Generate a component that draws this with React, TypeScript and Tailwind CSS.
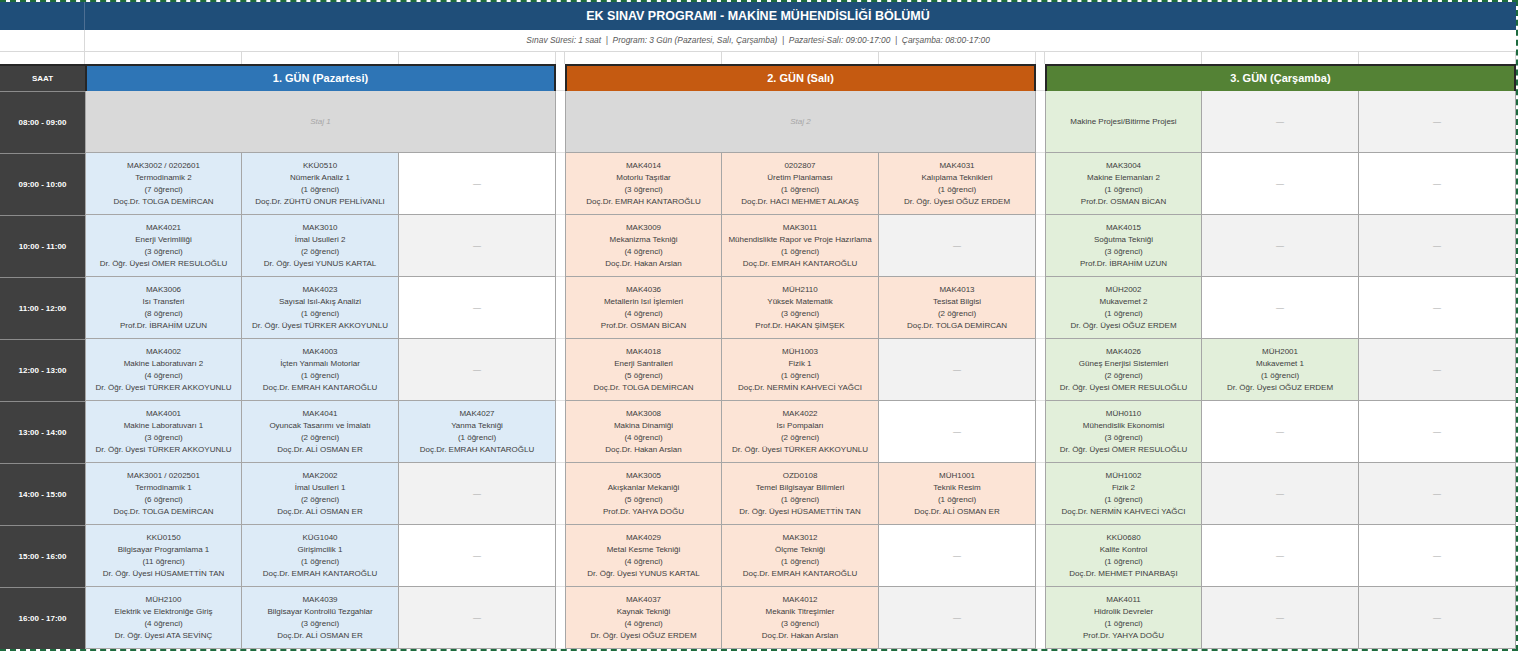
import React from 'react'

type Exam = { code: string; name: string; count: number; teacher: string }
type Cell = Exam | null | { single: string } | { staj: string }

const times = [
  '08:00 - 09:00',
  '09:00 - 10:00',
  '10:00 - 11:00',
  '11:00 - 12:00',
  '12:00 - 13:00',
  '13:00 - 14:00',
  '14:00 - 15:00',
  '15:00 - 16:00',
  '16:00 - 17:00',
]

const e = (code: string, name: string, count: number, teacher: string): Exam => ({ code, name, count, teacher })

const days: { title: string; head: string; fill: string; rows: Cell[][] }[] = [
  {
    title: '1. GÜN (Pazartesi)',
    head: 'bg-[#2e75b6]',
    fill: 'bg-[#ddebf7]',
    rows: [
      [{ staj: 'Staj 1' }],
      [e('MAK3002 / 0202601', 'Termodinamik 2', 7, 'Doç.Dr. TOLGA DEMİRCAN'), e('KKÜ0510', 'Nümerik Analiz 1', 1, 'Doç.Dr. ZÜHTÜ ONUR PEHLİVANLI'), null],
      [e('MAK4021', 'Enerji Verimliliği', 3, 'Dr. Öğr. Üyesi ÖMER RESULOĞLU'), e('MAK3010', 'İmal Usulleri 2', 2, 'Dr. Öğr. Üyesi YUNUS KARTAL'), null],
      [e('MAK3006', 'Isı Transferi', 8, 'Prof.Dr. İBRAHİM UZUN'), e('MAK4023', 'Sayısal Isıl-Akış Analizi', 1, 'Dr. Öğr. Üyesi TÜRKER AKKOYUNLU'), null],
      [e('MAK4002', 'Makine Laboratuvarı 2', 4, 'Dr. Öğr. Üyesi TÜRKER AKKOYUNLU'), e('MAK4003', 'İçten Yanmalı Motorlar', 1, 'Doç.Dr. EMRAH KANTAROĞLU'), null],
      [e('MAK4001', 'Makine Laboratuvarı 1', 3, 'Dr. Öğr. Üyesi TÜRKER AKKOYUNLU'), e('MAK4041', 'Oyuncak Tasarımı ve İmalatı', 2, 'Doç.Dr. ALİ OSMAN ER'), e('MAK4027', 'Yanma Tekniği', 1, 'Doç.Dr. EMRAH KANTAROĞLU')],
      [e('MAK3001 / 0202501', 'Termodinamik 1', 6, 'Doç.Dr. TOLGA DEMİRCAN'), e('MAK2002', 'İmal Usulleri 1', 2, 'Doç.Dr. ALİ OSMAN ER'), null],
      [e('KKÜ0150', 'Bilgisayar Programlama 1', 11, 'Dr. Öğr. Üyesi HÜSAMETTİN TAN'), e('KÜG1040', 'Girişimcilik 1', 1, 'Doç.Dr. EMRAH KANTAROĞLU'), null],
      [e('MÜH2100', 'Elektrik ve Elektroniğe Giriş', 4, 'Dr. Öğr. Üyesi ATA SEVİNÇ'), e('MAK4039', 'Bilgisayar Kontrollü Tezgahlar', 3, 'Doç.Dr. ALİ OSMAN ER'), null],
    ],
  },
  {
    title: '2. GÜN (Salı)',
    head: 'bg-[#c55a11]',
    fill: 'bg-[#fce4d6]',
    rows: [
      [{ staj: 'Staj 2' }],
      [e('MAK4014', 'Motorlu Taşıtlar', 3, 'Doç.Dr. EMRAH KANTAROĞLU'), e('0202807', 'Üretim Planlaması', 1, 'Doç.Dr. HACI MEHMET ALAKAŞ'), e('MAK4031', 'Kalıplama Teknikleri', 1, 'Dr. Öğr. Üyesi OĞUZ ERDEM')],
      [e('MAK3009', 'Mekanizma Tekniği', 4, 'Doç.Dr. Hakan Arslan'), e('MAK3011', 'Mühendislikte Rapor ve Proje Hazırlama', 1, 'Doç.Dr. EMRAH KANTAROĞLU'), null],
      [e('MAK4036', 'Metallerin Isıl İşlemleri', 4, 'Prof.Dr. OSMAN BİCAN'), e('MÜH2110', 'Yüksek Matematik', 3, 'Prof.Dr. HAKAN ŞİMŞEK'), e('MAK4013', 'Tesisat Bilgisi', 2, 'Doç.Dr. TOLGA DEMİRCAN')],
      [e('MAK4018', 'Enerji Santralleri', 5, 'Doç.Dr. TOLGA DEMİRCAN'), e('MÜH1003', 'Fizik 1', 1, 'Doç.Dr. NERMİN KAHVECİ YAĞCI'), null],
      [e('MAK3008', 'Makina Dinamiği', 4, 'Doç.Dr. Hakan Arslan'), e('MAK4022', 'Isı Pompaları', 2, 'Dr. Öğr. Üyesi TÜRKER AKKOYUNLU'), null],
      [e('MAK3005', 'Akışkanlar Mekaniği', 5, 'Prof.Dr. YAHYA DOĞU'), e('OZD0108', 'Temel Bilgisayar Bilimleri', 1, 'Dr. Öğr. Üyesi HÜSAMETTİN TAN'), e('MÜH1001', 'Teknik Resim', 1, 'Doç.Dr. ALİ OSMAN ER')],
      [e('MAK4029', 'Metal Kesme Tekniği', 4, 'Dr. Öğr. Üyesi YUNUS KARTAL'), e('MAK3012', 'Ölçme Tekniği', 1, 'Doç.Dr. EMRAH KANTAROĞLU'), null],
      [e('MAK4037', 'Kaynak Tekniği', 4, 'Dr. Öğr. Üyesi OĞUZ ERDEM'), e('MAK4012', 'Mekanik Titreşimler', 3, 'Doç.Dr. Hakan Arslan'), null],
    ],
  },
  {
    title: '3. GÜN (Çarşamba)',
    head: 'bg-[#548235]',
    fill: 'bg-[#e2efda]',
    rows: [
      [{ single: 'Makine Projesi/Bitirme Projesi' }, null, null],
      [e('MAK3004', 'Makine Elemanları 2', 1, 'Prof.Dr. OSMAN BİCAN'), null, null],
      [e('MAK4015', 'Soğutma Tekniği', 3, 'Prof.Dr. İBRAHİM UZUN'), null, null],
      [e('MÜH2002', 'Mukavemet 2', 1, 'Dr. Öğr. Üyesi OĞUZ ERDEM'), null, null],
      [e('MAK4026', 'Güneş Enerjisi Sistemleri', 2, 'Dr. Öğr. Üyesi ÖMER RESULOĞLU'), e('MÜH2001', 'Mukavemet 1', 1, 'Dr. Öğr. Üyesi OĞUZ ERDEM'), null],
      [e('MÜH0110', 'Mühendislik Ekonomisi', 3, 'Dr. Öğr. Üyesi ÖMER RESULOĞLU'), null, null],
      [e('MÜH1002', 'Fizik 2', 1, 'Doç.Dr. NERMİN KAHVECİ YAĞCI'), null, null],
      [e('KKÜ0680', 'Kalite Kontrol', 1, 'Doç.Dr. MEHMET PINARBAŞI'), null, null],
      [e('MAK4011', 'Hidrolik Devreler', 1, 'Prof.Dr. YAHYA DOĞU'), null, null],
    ],
  },
]

function DayCell({ cell, fill, row, first }: { cell: Cell; fill: string; row: number; first: boolean }) {
  const edge = first ? 'border-l' : ''
  if (cell && 'staj' in cell) {
    return (
      <div className="col-span-3 flex items-center justify-center border-b border-r border-l border-[#a6a6a6] bg-[#d9d9d9] text-[8px] italic text-[#a6a6a6]">
        {cell.staj}
      </div>
    )
  }
  if (!cell) {
    const bg = row % 2 === 0 ? 'bg-[#f2f2f2]' : 'bg-white'
    return (
      <div className={`flex items-center justify-center border-b border-r border-[#a6a6a6] ${edge} ${bg} text-[8px] text-[#a6a6a6]`}>
        —
      </div>
    )
  }
  if ('single' in cell) {
    return (
      <div className={`flex items-center justify-center border-b border-r border-[#a6a6a6] ${edge} ${fill} text-[8px] text-[#404040]`}>
        {cell.single}
      </div>
    )
  }
  return (
    <div className={`flex flex-col items-center justify-center border-b border-r border-[#a6a6a6] ${edge} ${fill} text-center text-[8px] leading-[12px] text-[#404040] whitespace-nowrap`}>
      <span>{cell.code}</span>
      <span>{cell.name}</span>
      <span>({cell.count} öğrenci)</span>
      <span>{cell.teacher}</span>
    </div>
  )
}

export default function App() {
  const sep = '\u00a0\u00a0|\u00a0\u00a0'
  return (
    <div className="w-[1518px] h-[651px] overflow-hidden bg-white font-['Liberation_Sans',Arial,sans-serif]">
      <div className="w-[1518px] border-t-2 border-r-2 border-b-2 border-dashed border-[#1d6b3e]">
        <div className="grid grid-cols-[85px_repeat(3,157px)_9px_repeat(3,157px)_9px_repeat(3,157px)] grid-rows-[28px_22px_12px_27px_repeat(9,62px)]">
          {/* title */}
          <div className="border-r border-[#4d6f93] bg-[#1f4e79]" />
          <div className="col-span-11 flex items-center justify-center bg-[#1f4e79] pr-[85px] text-[12.5px] font-bold text-white">
            EK SINAV PROGRAMI - MAKİNE MÜHENDİSLİĞİ BÖLÜMÜ
          </div>

          {/* subtitle */}
          <div className="border-r border-b border-[#d9d9d9]" />
          <div className="col-span-11 flex items-center justify-center border-b border-[#d9d9d9] pr-[85px] text-[8.4px] italic text-[#595959]">
            Sınav Süresi: 1 saat{sep}Program: 3 Gün (Pazartesi, Salı, Çarşamba){sep}Pazartesi-Salı: 09:00-17:00{sep}Çarşamba: 08:00-17:00
          </div>

          {/* spacer row */}
          <div className="border-r border-[#d9d9d9]" />
          {Array.from({ length: 11 }).map((_, i) => (
            <div key={i} className="border-r border-[#d9d9d9]" />
          ))}

          {/* header */}
          <div className="flex items-center justify-center border-t-2 border-[#262626] bg-[#404040] text-[8px] font-bold text-white">
            SAAT
          </div>
          {days.map((d, i) => (
            <React.Fragment key={d.title}>
              <div className={`col-span-3 flex items-center justify-center border-x-2 border-t-2 border-[#262626] ${d.head} text-[11px] font-bold text-white`}>
                {d.title}
              </div>
              {i < 2 && <div className="border-b border-[#e0e0e0] bg-white" />}
            </React.Fragment>
          ))}

          {/* body */}
          {times.map((t, r) => (
            <React.Fragment key={t}>
              <div className="flex items-center justify-center border-t border-[#8c8c8c] bg-[#404040] text-[8px] font-bold text-white">
                {t}
              </div>
              {days.map((d, i) => (
                <React.Fragment key={d.title}>
                  {d.rows[r].map((c, k) => (
                    <DayCell key={k} cell={c} fill={d.fill} row={r} first={k === 0} />
                  ))}
                  {i < 2 && <div className="border-b border-[#e0e0e0] bg-white" />}
                </React.Fragment>
              ))}
            </React.Fragment>
          ))}
        </div>
      </div>
    </div>
  )
}
